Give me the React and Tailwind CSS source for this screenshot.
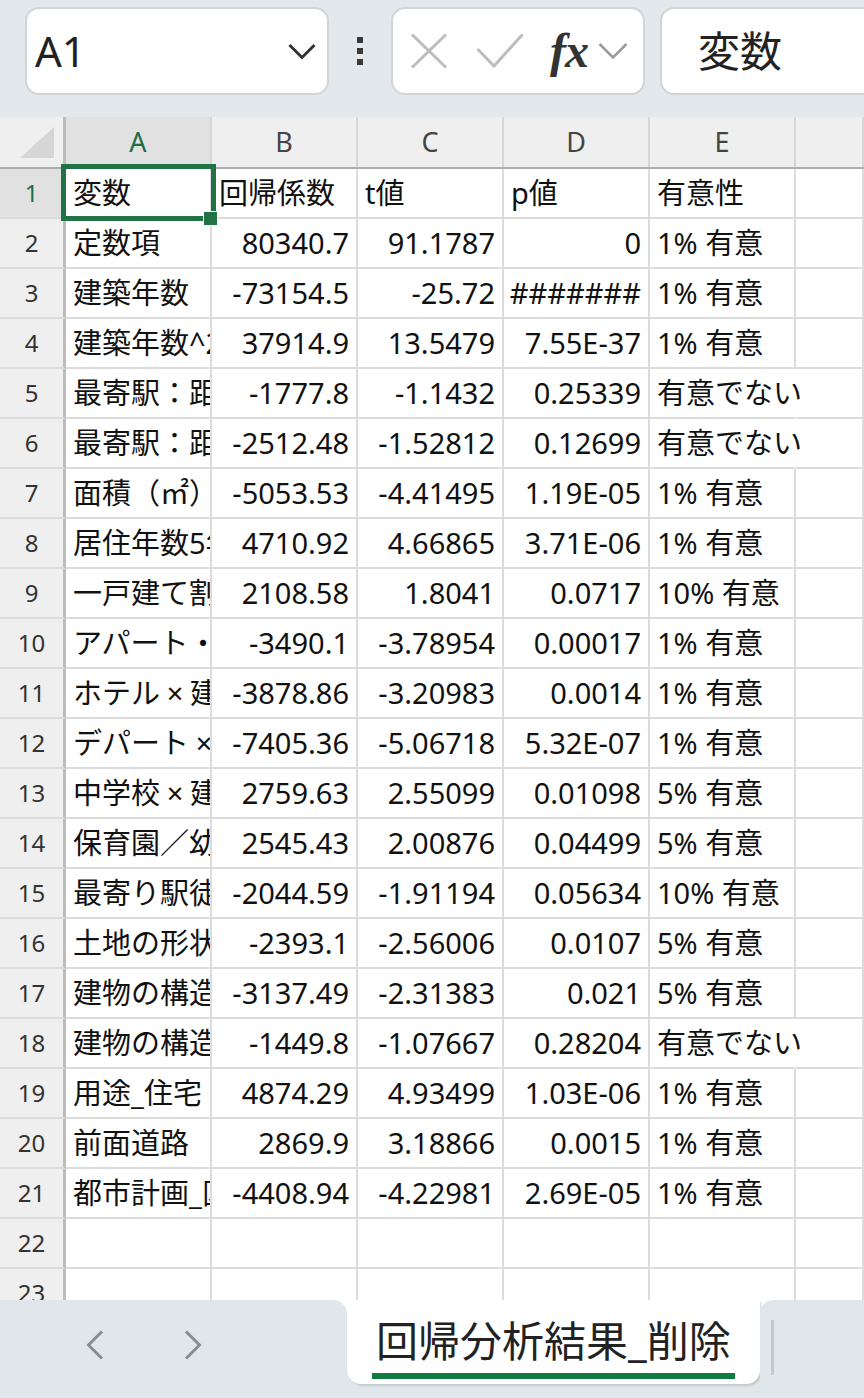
import React from 'react';

const rows = [
  ['変数', '回帰係数', 't値', 'p値', '有意性'],
  ['定数項', '80340.7', '91.1787', '0', '1% 有意'],
  ['建築年数', '-73154.5', '-25.72', '#######', '1% 有意'],
  ['建築年数^2', '37914.9', '13.5479', '7.55E-37', '1% 有意'],
  ['最寄駅：距離', '-1777.8', '-1.1432', '0.25339', '有意でない'],
  ['最寄駅：距離2', '-2512.48', '-1.52812', '0.12699', '有意でない'],
  ['面積（㎡）', '-5053.53', '-4.41495', '1.19E-05', '1% 有意'],
  ['居住年数5年', '4710.92', '4.66865', '3.71E-06', '1% 有意'],
  ['一戸建て割合', '2108.58', '1.8041', '0.0717', '10% 有意'],
  ['アパート・マンション', '-3490.1', '-3.78954', '0.00017', '1% 有意'],
  ['ホテル×建築年数', '-3878.86', '-3.20983', '0.0014', '1% 有意'],
  ['デパート×建築年数', '-7405.36', '-5.06718', '5.32E-07', '1% 有意'],
  ['中学校×建築年数', '2759.63', '2.55099', '0.01098', '5% 有意'],
  ['保育園／幼稚園', '2545.43', '2.00876', '0.04499', '5% 有意'],
  ['最寄り駅徒歩', '-2044.59', '-1.91194', '0.05634', '10% 有意'],
  ['土地の形状', '-2393.1', '-2.56006', '0.0107', '5% 有意'],
  ['建物の構造', '-3137.49', '-2.31383', '0.021', '5% 有意'],
  ['建物の構造2', '-1449.8', '-1.07667', '0.28204', '有意でない'],
  ['用途_住宅', '4874.29', '4.93499', '1.03E-06', '1% 有意'],
  ['前面道路　幅員', '2869.9', '3.18866', '0.0015', '1% 有意'],
  ['都市計画_区域', '-4408.94', '-4.22981', '2.69E-05', '1% 有意'],
  ['', '', '', '', ''],
  ['', '', '', '', ''],
];

const cols = ['A', 'B', 'C', 'D', 'E'];

// full-width × like the Japanese UI font draws it
function Label({ text }) {
  const parts = text.split('×');
  return (
    <>
      {parts.map((p, i) => (
        <React.Fragment key={i}>
          {i > 0 && <span className="inline-block shrink-0 w-[30px] text-center">×</span>}
          {p}
        </React.Fragment>
      ))}
    </>
  );
}

function TopBar() {
  return (
    <div className="h-[117px] shrink-0 bg-[#e3e8ec] flex items-start pt-[7px] overflow-hidden">
      {/* name box */}
      <div className="shrink-0 ml-[25px] w-[304px] h-[88px] bg-white border-2 border-[#d2d5d7] rounded-[14px] flex items-center pl-[8px] pr-[11px]">
        <span className="text-[42px] text-[#222] leading-none">A1</span>
        <svg className="ml-auto" width="28" height="17" viewBox="0 0 28 17">
          <polyline points="1.5,2 14,14.5 26.5,2" fill="none" stroke="#333" strokeWidth="3" />
        </svg>
      </div>
      <div className="shrink-0 w-[62px] h-[88px] flex flex-col items-center justify-center gap-[5px]">
        <div className="w-[6px] h-[6px] bg-[#3a3a3a]"></div>
        <div className="w-[6px] h-[6px] bg-[#3a3a3a]"></div>
        <div className="w-[6px] h-[6px] bg-[#3a3a3a]"></div>
      </div>
      {/* formula buttons */}
      <div className="shrink-0 w-[254px] h-[88px] bg-white border-2 border-[#d2d5d7] rounded-[14px] flex items-center pl-[17px]">
        <svg width="38" height="36" viewBox="0 0 38 36">
          <line x1="2" y1="1.5" x2="36" y2="34.5" stroke="#bdbdbd" strokeWidth="3" />
          <line x1="36" y1="1.5" x2="2" y2="34.5" stroke="#bdbdbd" strokeWidth="3" />
        </svg>
        <svg className="ml-[28px]" width="48" height="36" viewBox="0 0 48 36">
          <polyline points="1.5,16 18,33 46.5,1.5" fill="none" stroke="#bdbdbd" strokeWidth="3" />
        </svg>
        <span className="ml-[26px] text-[48px] leading-none font-bold italic text-[#333] font-['Liberation_Serif',serif] tracking-[-1px]">fx</span>
        <svg className="ml-[10px]" width="30" height="18" viewBox="0 0 30 18">
          <polyline points="1.5,2 15,15.5 28.5,2" fill="none" stroke="#9a9a9a" strokeWidth="2.5" />
        </svg>
      </div>
      {/* formula content */}
      <div className="shrink-0 ml-[15px] w-[240px] h-[88px] bg-white border-2 border-[#d2d5d7] rounded-[14px] flex items-center pl-[36px]">
        <span className="text-[42px] text-[#222] leading-none">変数</span>
      </div>
    </div>
  );
}

function HeaderRow() {
  return (
    <div className="flex h-[52px] shrink-0 border-b-2 border-[#adadad] bg-[#efefef]">
      <div className="w-[66px] shrink-0 border-r-[3px] border-[#bcbcbc] relative">
        <svg className="absolute right-[9px] bottom-[9px]" width="34" height="31" viewBox="0 0 34 31">
          <polygon points="34,0 34,31 0,31" fill="#d6d6d6" />
        </svg>
      </div>
      {cols.map((c) => (
        <div
          key={c}
          className={`w-[146px] shrink-0 border-r-2 border-[#d6d6d6] flex items-center justify-center text-[27px] ${c === 'A' ? 'bg-[#e1e1e1] text-[#1e6e42]' : 'text-[#444]'}`}
        >
          {c}
        </div>
      ))}
      <div className="flex-1 border-r-2 border-[#d6d6d6]"></div>
    </div>
  );
}

function DataRow({ r, i }) {
  const header = i === 0;
  const overflowE = r[4] === '有意でない';
  return (
    <div className="flex h-[50px] shrink-0">
      <div
        className={`w-[66px] shrink-0 border-r-[3px] border-r-[#bcbcbc] border-b-2 border-b-[#dcdcdc] flex items-center justify-center text-[24px] ${i === 0 ? 'bg-[#e1e1e1] text-[#1e6e42]' : 'bg-[#efefef] text-[#333]'}`}
      >
        {i + 1}
      </div>
      <div className="w-[146px] shrink-0 border-r-2 border-b-2 border-[#dcdcdc] flex items-center pl-[7px] overflow-hidden whitespace-nowrap">
        <Label text={r[0]} />
      </div>
      {[1, 2, 3].map((k) => (
        <div
          key={k}
          className={`w-[146px] shrink-0 border-r-2 border-b-2 border-[#dcdcdc] flex items-center whitespace-nowrap overflow-hidden ${header ? 'justify-start pl-[7px]' : 'justify-end pr-[7px]'}`}
        >
          {r[k]}
        </div>
      ))}
      <div
        className={`w-[146px] shrink-0 border-r-2 border-b-2 border-b-[#dcdcdc] flex items-center pl-[7px] whitespace-nowrap relative z-10 ${overflowE ? 'border-r-transparent' : 'border-r-[#dcdcdc]'}`}
      >
        {r[4]}
      </div>
      <div className="flex-1 border-b-2 border-r-2 border-[#dcdcdc]"></div>
    </div>
  );
}

function Grid() {
  return (
    <div className="h-[1183px] shrink-0 overflow-hidden relative flex flex-col text-[29px] text-[#111]">
      <HeaderRow />
      {rows.map((r, i) => (
        <DataRow key={i} r={r} i={i} />
      ))}
      {/* selection A1 */}
      <div className="absolute left-[61px] top-[47px] w-[155px] h-[57px] border-[5px] border-[#217346] z-20"></div>
      <div className="absolute left-[203px] top-[94px] w-[15px] h-[15px] bg-[#217346] border border-white z-30"></div>
    </div>
  );
}

function BottomBar() {
  return (
    <div className="flex-1 flex bg-white">
      <div className="w-[347px] shrink-0 bg-[#e1e6ea] rounded-tr-[14px] flex items-start pt-[30px]">
        <svg className="ml-[86px]" width="18" height="30" viewBox="0 0 18 30">
          <polyline points="16,1.5 2.5,15 16,28.5" fill="none" stroke="#8c8c8c" strokeWidth="3" />
        </svg>
        <svg className="ml-[80px]" width="18" height="30" viewBox="0 0 18 30">
          <polyline points="2,1.5 15.5,15 2,28.5" fill="none" stroke="#8c8c8c" strokeWidth="3" />
        </svg>
      </div>
      <div className="w-[413px] shrink-0 bg-[#e1e6ea] flex flex-col">
        <div className="h-[84px] bg-white rounded-b-[14px] shadow-[2px_2px_2px_rgba(0,0,0,0.12)] flex flex-col pl-[25px] pt-[19px]">
          <span className="text-[42px] leading-[44px] text-[#222] whitespace-nowrap pl-[4px]">回帰分析結果_削除</span>
          <div className="mt-[10px] w-[363px] h-[6px] bg-[#107c41]"></div>
        </div>
      </div>
      <div className="flex-1 bg-[#e1e6ea] rounded-tl-[14px] pl-[11px] pt-[20px]">
        <div className="w-[3px] h-[55px] bg-[#c8c8c8]"></div>
      </div>
    </div>
  );
}

export default function App() {
  return (
    <div className="w-[864px] h-[1398px] overflow-hidden flex flex-col bg-white font-['Noto_Sans','Noto_Sans_CJK_JP',sans-serif]">
      <TopBar />
      <Grid />
      <BottomBar />
    </div>
  );
}
